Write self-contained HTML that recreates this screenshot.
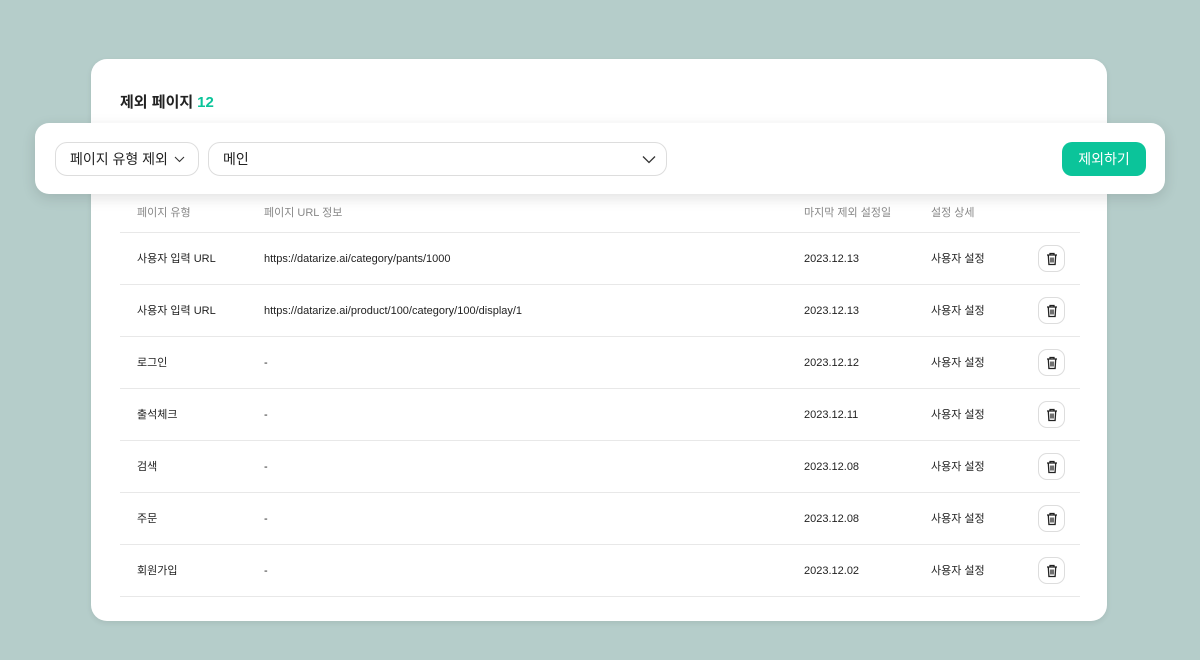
<!DOCTYPE html><html><head><meta charset="utf-8"><style>
*{margin:0;padding:0;box-sizing:border-box}
body{width:1200px;height:660px;background:#b5cdca;font-family:"Liberation Sans","Noto Sans CJK KR",sans-serif;position:relative;overflow:hidden;color:#222}
.card{position:absolute;left:91px;top:59px;width:1016px;height:562px;background:#fff;border-radius:16px;box-shadow:0 2px 6px rgba(0,0,0,.08)}
.title{position:absolute;left:120px;top:91px;font-size:15px;font-weight:bold;color:#222}
.title span{color:#0bc49a;margin-left:4px}
.bar{position:absolute;left:35px;top:123px;width:1130px;height:71px;background:#fff;border-radius:14px;box-shadow:0 4px 14px rgba(0,0,0,.12);z-index:2}
.sel{position:absolute;top:19px;height:34px;border:1px solid #ddd;border-radius:12px;font-size:14px;line-height:32px;padding-left:14px}
.sel svg{position:absolute;top:12px}
.btn{position:absolute;left:1027px;top:19px;width:84px;height:34px;background:#0bc49a;border-radius:10px;color:#fff;font-size:14px;line-height:34px;text-align:center}
.row{position:absolute;left:120px;width:960px;height:52px;border-bottom:1px solid #e8e8e8;font-size:11px;color:#222}
.row div{position:absolute;top:0;line-height:52px}
.hd{color:#888;height:40px}
.hd div{line-height:40px}
.c1{left:17px}.c2{left:144px}.c3{left:684px}.c4{left:811px}
.del{position:absolute;left:918px;top:12px;width:27px;height:27px;border:1px solid #ddd;border-radius:9px}
.del svg{position:absolute;left:7px;top:6px}
</style></head><body>
<div class="card"></div>
<div class="title">제외 페이지<span>12</span></div>
<div class="bar">
<div class="sel" style="left:20px;width:144px">페이지 유형 제외<svg style="left:118px;top:13px" width="11" height="7" viewBox="0 0 11 7"><path d="M1 1l4.5 4.5L10 1" fill="none" stroke="#333" stroke-width="1.1"/></svg></div>
<div class="sel" style="left:173px;width:459px">메인<svg style="left:433px" width="14" height="9" viewBox="0 0 14 9"><path d="M1 1.5l6 6 6-6" fill="none" stroke="#333" stroke-width="1.3"/></svg></div>
<div class="btn">제외하기</div>
</div>
<div class="row hd" style="top:193px"><div class="c1">페이지 유형</div><div class="c2">페이지 URL 정보</div><div class="c3">마지막 제외 설정일</div><div class="c4">설정 상세</div></div>
<div id="rows"></div>
<script>
var d=[["사용자 입력 URL","https://datarize.ai/category/pants/1000","2023.12.13"],["사용자 입력 URL","https://datarize.ai/product/100/category/100/display/1","2023.12.13"],["로그인","-","2023.12.12"],["출석체크","-","2023.12.11"],["검색","-","2023.12.08"],["주문","-","2023.12.08"],["회원가입","-","2023.12.02"]];
var h="";var ic='<svg width="12" height="14" viewBox="0 0 12 14"><path d="M1 3h10M4 3V1.5h4V3M2.3 3l.6 9.5h6.2l.6-9.5M5 5.5v5M7 5.5v5" fill="none" stroke="#222" stroke-width="1.3"/></svg>';
d.forEach(function(r,i){h+='<div class="row" style="top:'+(233+i*52)+'px"><div class="c1">'+r[0]+'</div><div class="c2">'+r[1]+'</div><div class="c3">'+r[2]+'</div><div class="c4">사용자 설정</div><span class="del">'+ic+'</span></div>';});
document.getElementById("rows").innerHTML=h;
</script>
</body></html>
